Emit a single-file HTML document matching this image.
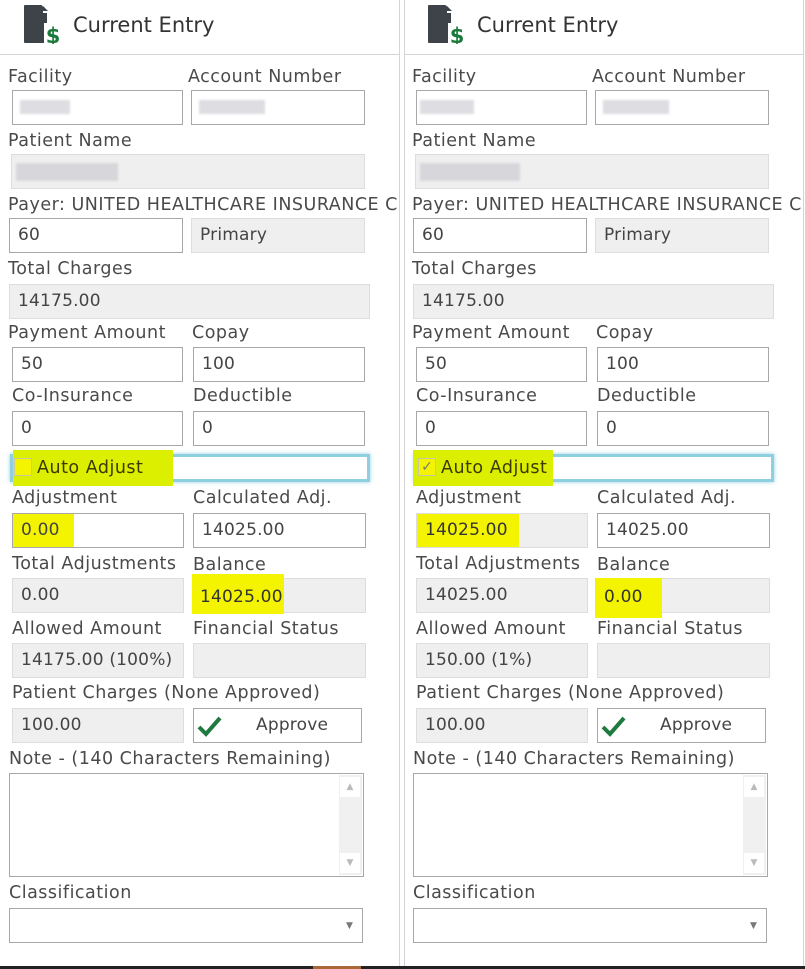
<!DOCTYPE html>
<html><head><meta charset="utf-8"><style>
*{box-sizing:border-box;margin:0;padding:0}
body{width:805px;height:969px;background:#fff;position:relative;overflow:hidden;font-family:"DejaVu Sans","Liberation Sans",sans-serif;color:#444}
.p{position:absolute;top:0;width:400px;height:966px}
.l{position:absolute;font-size:17.5px;line-height:20px;white-space:nowrap;color:#4a4a4a;letter-spacing:0.5px}
.b{position:absolute;border:1px solid #a8a8a8;background:#fff;font-size:17px;line-height:33px;padding-left:8px;color:#444;height:35px;white-space:nowrap;letter-spacing:0.2px}
.g{background:#efefef;border-color:#ddd}
.hl{position:absolute;background:#f4f400}
.blur{position:absolute;background:#c8c8cf;opacity:.6;filter:blur(1px)}
</style></head><body>
<div style="position:absolute;left:399px;top:0;width:1px;height:966px;background:#d4d4d4"></div>
<div style="position:absolute;left:404px;top:0;width:1px;height:966px;background:#d4d4d4"></div>
<div style="position:absolute;left:803px;top:0;width:1px;height:966px;background:#d4d4d4"></div>
<div style="position:absolute;left:0;top:966px;width:805px;height:3px;background:#222"></div>
<div style="position:absolute;left:313px;top:966px;width:48px;height:3px;background:#a86838"></div>

<!-- LEFT -->
<div class="p" style="left:0">
<div style="position:absolute;left:0;top:54px;width:399px;height:1px;background:#d4d4d4"></div>
<svg style="position:absolute;left:24px;top:4px" width="40" height="40" viewBox="0 0 40 40"><path d="M1 2H17L22 7V38H1Z" fill="#3e4249" stroke="#3e4249" stroke-linejoin="round" stroke-width="2"/><path d="M19 2L24 7V9H19Z" fill="#fff"/><path d="M19 2L24 7H19Z" fill="#3e4249"/><rect x="20" y="19" width="18" height="21" fill="#fff"/><text x="29" y="39" text-anchor="middle" font-family="DejaVu Sans" font-weight="bold" font-size="21" fill="#1a7a3a">$</text></svg>
<div class="l" style="left:73px;top:12px;font-size:21px;line-height:26px;color:#333;letter-spacing:0">Current Entry</div>
<div class="l" style="left:8px;top:67px">Facility</div>
<div class="l" style="left:188px;top:67px">Account Number</div>
<div class="b" style="left:12px;top:90px;width:171px"></div><div class="blur" style="left:20px;top:100px;width:50px;height:14px"></div>
<div class="b" style="left:191px;top:90px;width:174px"></div><div class="blur" style="left:199px;top:100px;width:66px;height:14px"></div>
<div class="l" style="left:8px;top:131px">Patient Name</div>
<div class="b g" style="left:11px;top:154px;width:354px"></div><div class="blur" style="left:16px;top:163px;width:102px;height:18px"></div>
<div style="position:absolute;left:0;top:190px;width:399px;height:26px;overflow:hidden"><div class="l" style="left:8px;top:5px">Payer: UNITED HEALTHCARE INSURANCE C</div></div>
<div class="b" style="left:9px;top:218px;width:174px">60</div>
<div class="b g" style="left:191px;top:218px;width:174px">Primary</div>
<div class="l" style="left:8px;top:259px">Total Charges</div>
<div class="b g" style="left:9px;top:284px;width:361px">14175.00</div>
<div class="l" style="left:8px;top:323px">Payment Amount</div>
<div class="l" style="left:192px;top:323px">Copay</div>
<div class="b" style="left:12px;top:347px;width:171px">50</div>
<div class="b" style="left:193px;top:347px;width:172px">100</div>
<div class="l" style="left:12px;top:386px">Co-Insurance</div>
<div class="l" style="left:193px;top:386px">Deductible</div>
<div class="b" style="left:12px;top:411px;width:171px">0</div>
<div class="b" style="left:193px;top:411px;width:172px">0</div>
<div style="position:absolute;left:10px;top:454px;width:360px;height:28px;border:3px solid #8fd0e0;box-shadow:0 0 4px #8fd0e0"></div>
<div class="hl" style="left:13px;top:450px;width:160px;height:36px;background:#dcef00"></div>
<div style="position:absolute;left:14px;top:458px;width:18px;height:18px;border:1px solid #c8c8a0;background:#f4f400"></div>
<div class="l" style="left:37px;top:458px;color:#3a3a00">Auto Adjust</div>
<div class="l" style="left:12px;top:488px">Adjustment</div>
<div class="l" style="left:193px;top:488px">Calculated Adj.</div>
<div class="b" style="left:12px;top:513px;width:172px;padding:0"><span style="display:inline-block;background:#f4f400;padding-left:8px;width:61px;height:33px">0.00</span></div>
<div class="b" style="left:193px;top:513px;width:173px">14025.00</div>
<div class="l" style="left:12px;top:554px">Total Adjustments</div>
<div class="l" style="left:193px;top:555px">Balance</div>
<div class="b g" style="left:12px;top:578px;width:172px">0.00</div>
<div class="b g" style="left:193px;top:578px;width:173px"></div>
<div class="hl" style="left:192px;top:574px;width:92px;height:40px"></div>
<div class="l" style="left:200px;top:587px;color:#333;font-size:17px;letter-spacing:0.2px">14025.00</div>
<div class="l" style="left:12px;top:619px">Allowed Amount</div>
<div class="l" style="left:193px;top:619px">Financial Status</div>
<div class="b g" style="left:12px;top:643px;width:172px">14175.00 (100%)</div>
<div class="b g" style="left:193px;top:643px;width:173px"></div>
<div class="l" style="left:12px;top:683px">Patient Charges (None Approved)</div>
<div class="b g" style="left:12px;top:708px;width:172px">100.00</div>
<div class="b" style="left:193px;top:708px;width:169px;padding-left:62px">Approve</div>
<svg style="position:absolute;left:197px;top:715px" width="26" height="22"><path d="M2 12L9 19L23 3" stroke="#1e7a3e" stroke-width="4" fill="none"/></svg>
<div class="l" style="left:9px;top:749px">Note - (140 Characters Remaining)</div>
<div class="b" style="left:9px;top:773px;width:355px;height:104px"></div>
<div style="position:absolute;left:339px;top:775px;width:23px;height:100px;background:#f0f0f0"></div>
<div style="position:absolute;left:340px;top:777px;width:20px;height:20px;background:#fff;color:#bbb;font-size:9px;text-align:center;line-height:20px">▲</div>
<div style="position:absolute;left:340px;top:853px;width:20px;height:20px;background:#fff;color:#bbb;font-size:9px;text-align:center;line-height:20px">▼</div>
<div class="l" style="left:9px;top:883px">Classification</div>
<div class="b" style="left:9px;top:908px;width:354px;height:35px"></div>
<div style="position:absolute;left:346px;top:921px;color:#777;font-size:9px">▼</div>
</div>

<!-- RIGHT -->
<div class="p" style="left:404px">
<div style="position:absolute;left:0;top:54px;width:399px;height:1px;background:#d4d4d4"></div>
<svg style="position:absolute;left:24px;top:4px" width="40" height="40" viewBox="0 0 40 40"><path d="M1 2H17L22 7V38H1Z" fill="#3e4249" stroke="#3e4249" stroke-linejoin="round" stroke-width="2"/><path d="M19 2L24 7V9H19Z" fill="#fff"/><path d="M19 2L24 7H19Z" fill="#3e4249"/><rect x="20" y="19" width="18" height="21" fill="#fff"/><text x="29" y="39" text-anchor="middle" font-family="DejaVu Sans" font-weight="bold" font-size="21" fill="#1a7a3a">$</text></svg>
<div class="l" style="left:73px;top:12px;font-size:21px;line-height:26px;color:#333;letter-spacing:0">Current Entry</div>
<div class="l" style="left:8px;top:67px">Facility</div>
<div class="l" style="left:188px;top:67px">Account Number</div>
<div class="b" style="left:12px;top:90px;width:171px"></div><div class="blur" style="left:16px;top:100px;width:54px;height:14px"></div>
<div class="b" style="left:191px;top:90px;width:174px"></div><div class="blur" style="left:199px;top:100px;width:66px;height:14px"></div>
<div class="l" style="left:8px;top:131px">Patient Name</div>
<div class="b g" style="left:11px;top:154px;width:354px"></div><div class="blur" style="left:16px;top:163px;width:100px;height:18px"></div>
<div style="position:absolute;left:0;top:190px;width:399px;height:26px;overflow:hidden"><div class="l" style="left:8px;top:5px">Payer: UNITED HEALTHCARE INSURANCE C</div></div>
<div class="b" style="left:9px;top:218px;width:174px">60</div>
<div class="b g" style="left:191px;top:218px;width:174px">Primary</div>
<div class="l" style="left:8px;top:259px">Total Charges</div>
<div class="b g" style="left:9px;top:284px;width:361px">14175.00</div>
<div class="l" style="left:8px;top:323px">Payment Amount</div>
<div class="l" style="left:192px;top:323px">Copay</div>
<div class="b" style="left:12px;top:347px;width:171px">50</div>
<div class="b" style="left:193px;top:347px;width:172px">100</div>
<div class="l" style="left:12px;top:386px">Co-Insurance</div>
<div class="l" style="left:193px;top:386px">Deductible</div>
<div class="b" style="left:12px;top:411px;width:171px">0</div>
<div class="b" style="left:193px;top:411px;width:172px">0</div>
<div style="position:absolute;left:10px;top:454px;width:360px;height:28px;border:3px solid #8fd0e0;box-shadow:0 0 4px #8fd0e0"></div>
<div class="hl" style="left:9px;top:450px;width:140px;height:36px;background:#dcef00"></div>
<div style="position:absolute;left:14px;top:458px;width:18px;height:18px;border:1px solid #c8c8a0;background:#f4f400;color:#777;font-size:14px;line-height:16px;text-align:center">✓</div>
<div class="l" style="left:37px;top:458px;color:#3a3a00">Auto Adjust</div>
<div class="l" style="left:12px;top:488px">Adjustment</div>
<div class="l" style="left:193px;top:488px">Calculated Adj.</div>
<div class="b g" style="left:12px;top:513px;width:172px;padding:0"><span style="display:inline-block;background:#f4f400;padding-left:8px;width:102px;height:33px;color:#333">14025.00</span></div>
<div class="b" style="left:193px;top:513px;width:173px">14025.00</div>
<div class="l" style="left:12px;top:554px">Total Adjustments</div>
<div class="l" style="left:193px;top:555px">Balance</div>
<div class="b g" style="left:12px;top:578px;width:172px">14025.00</div>
<div class="b g" style="left:193px;top:578px;width:173px"></div>
<div class="hl" style="left:191px;top:578px;width:67px;height:40px"></div>
<div class="l" style="left:200px;top:587px;color:#333;font-size:17px;letter-spacing:0.2px">0.00</div>
<div class="l" style="left:12px;top:619px">Allowed Amount</div>
<div class="l" style="left:193px;top:619px">Financial Status</div>
<div class="b g" style="left:12px;top:643px;width:172px">150.00 (1%)</div>
<div class="b g" style="left:193px;top:643px;width:173px"></div>
<div class="l" style="left:12px;top:683px">Patient Charges (None Approved)</div>
<div class="b g" style="left:12px;top:708px;width:172px">100.00</div>
<div class="b" style="left:193px;top:708px;width:169px;padding-left:62px">Approve</div>
<svg style="position:absolute;left:197px;top:715px" width="26" height="22"><path d="M2 12L9 19L23 3" stroke="#1e7a3e" stroke-width="4" fill="none"/></svg>
<div class="l" style="left:9px;top:749px">Note - (140 Characters Remaining)</div>
<div class="b" style="left:9px;top:773px;width:355px;height:104px"></div>
<div style="position:absolute;left:339px;top:775px;width:23px;height:100px;background:#f0f0f0"></div>
<div style="position:absolute;left:340px;top:777px;width:20px;height:20px;background:#fff;color:#bbb;font-size:9px;text-align:center;line-height:20px">▲</div>
<div style="position:absolute;left:340px;top:853px;width:20px;height:20px;background:#fff;color:#bbb;font-size:9px;text-align:center;line-height:20px">▼</div>
<div class="l" style="left:9px;top:883px">Classification</div>
<div class="b" style="left:9px;top:908px;width:354px;height:35px"></div>
<div style="position:absolute;left:346px;top:921px;color:#777;font-size:9px">▼</div>
</div>
</body></html>
